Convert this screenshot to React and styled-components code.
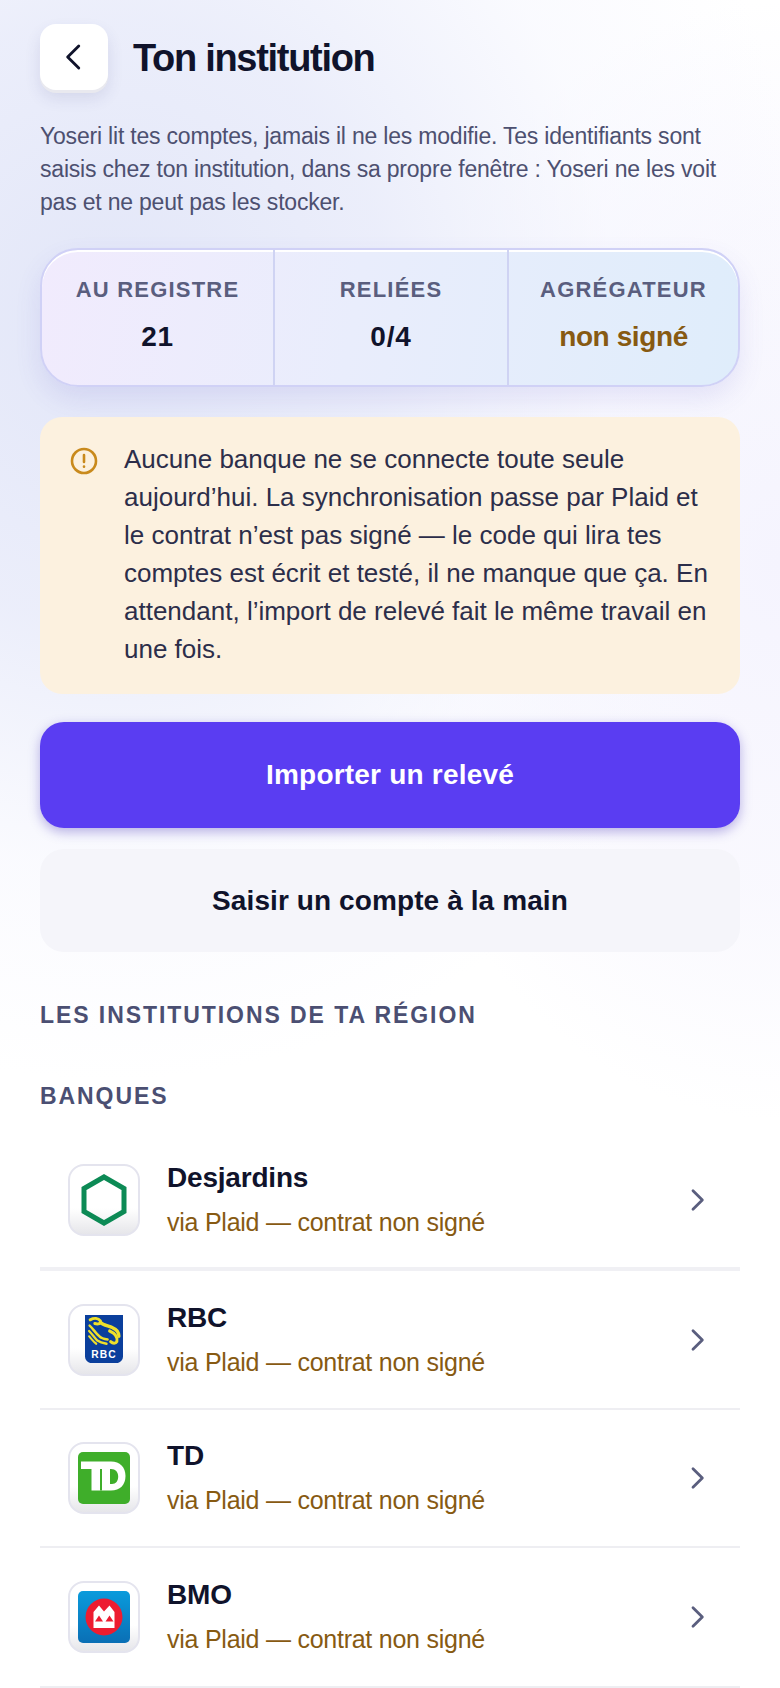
import React from "react";
import styled, { createGlobalStyle } from "styled-components";

const Global = createGlobalStyle`
  html, body { margin: 0; padding: 0; background: #fff; }
  body { font-family: "Liberation Sans", Arial, sans-serif; }
  * { box-sizing: border-box; }
`;
const Page = styled.div`
  width: 780px; height: 1688px; overflow: hidden; padding: 24px 40px 0;
  background:
    radial-gradient(ellipse 700px 760px at 110px 320px, #e2e6f8 0%, rgba(232,235,250,.85) 40%, rgba(245,246,254,.5) 72%, rgba(255,255,255,0) 100%),
    radial-gradient(ellipse 420px 560px at 780px 560px, #f5f4fe 0%, rgba(247,246,254,.7) 60%, rgba(255,255,255,0) 100%),
    #fff;
`;
const Header = styled.header`display: flex; align-items: center; gap: 24px; height: 66px;`;
const BackButton = styled.button`
  width: 68px; height: 66px; border: 0; border-radius: 16px; background: #fff; padding: 0;
  display: flex; align-items: center; justify-content: center;
  box-shadow: 0 3px 0 #e9e9ef, 0 8px 16px rgba(60,60,120,.12);
`;
const Title = styled.h1`margin: 2px 0 0 1px; font-size: 38px; font-weight: 700; letter-spacing: -1.3px; color: #10132b;`;
const Intro = styled.p`margin: 30px 0 0; font-size: 23px; line-height: 33px; color: #4d5070; letter-spacing: -.2px; width: 700px;`;
const Stats = styled.section`
  margin-top: 29px; height: 139px; display: grid; grid-template-columns: 231px 234px 1fr;
  border-radius: 38px; border: 2px solid #d0d1f6;
  background: linear-gradient(100deg, #f1ebfd 0%, #e9edfc 45%, #dfedfb 100%);
  box-shadow: 0 12px 26px rgba(90,80,200,.12), inset 0 2px 0 #fff;
  overflow: hidden;
`;
const Stat = styled.div`
  display: flex; flex-direction: column; align-items: center; padding-top: 27px; gap: 18px;
  & + & { border-left: 2px solid #cfd3f3; }
`;
const StatLabel = styled.div`font-size: 22px; font-weight: 700; letter-spacing: 1.2px; color: #5a5e7e; line-height: 26px;`;
const StatValue = styled.div`font-size: 28px; font-weight: 700; line-height: 32px; letter-spacing: ${p => p.$warn ? "-.4px" : ".8px"}; color: ${p => p.$warn ? "#875a12" : "#10132b"};`;
const Alert = styled.div`
  margin-top: 30px; height: 277px; border-radius: 22px; background: #fcf1df;
  padding: 23px 30px 0 30px; display: flex; gap: 24px;
`;
const AlertIcon = styled.div`flex: none; width: 30px; padding-top: 7px;`;
const AlertText = styled.p`margin: 0; font-size: 26px; line-height: 38px; color: #2c2e4a;`;
const Button = styled.button`
  display: block; width: 100%; border: 0; font-family: inherit; font-weight: 700; font-size: 28px;
  letter-spacing: ${p => p.$primary ? ".2px" : ".1px"};
  border-radius: 24px; margin-top: ${p => p.$primary ? 28 : 21}px; height: ${p => p.$primary ? 106 : 103}px;
  background: ${p => p.$primary ? "#5a3df2" : "#f5f5fa"}; color: ${p => p.$primary ? "#fff" : "#10132b"};
  box-shadow: ${p => p.$primary ? "0 4px 12px rgba(60,40,180,.35)" : "none"};
`;
const SectionTitle = styled.h2`
  margin: ${p => p.$top}px 0 0; font-size: 23px; line-height: 26px; font-weight: 700; letter-spacing: 1.93px; color: #4b4f72;
`;
const List = styled.div`margin-top: 24px;`;
const Row = styled.div`
  display: flex; align-items: center; height: ${p => p.$h}px; padding: 0 27px 0 28px; border-bottom: ${p => p.$thick ? "4px solid #f0f0f4" : "2px solid #eeeef2"};
`;
const LogoTile = styled.div`
  flex: none; width: 72px; height: 72px; border-radius: 16px; border: 2px solid #e4e4ee;
  background: linear-gradient(180deg, #fff 0%, #fff 62%, #e6e6ea 100%);
  display: flex; align-items: center; justify-content: center; margin-right: 27px;
`;
const RowText = styled.div`flex: 1; min-width: 0; padding-bottom: 2px;`;
const RowName = styled.div`font-size: 28px; font-weight: 700; line-height: 36px; letter-spacing: -.2px; color: #10132b;`;
const RowSub = styled.div`margin-top: 10px; font-size: 25px; line-height: 32px; letter-spacing: -.25px; color: #875a12;`;

const Chevron = ({ size = 28, color = "#5a5e7e", dir = "right", sw = 2.1 }) => (
  <svg width={size} height={size} viewBox="0 0 24 24" fill="none" stroke={color} strokeWidth={sw} strokeLinecap="round" strokeLinejoin="round">
    <path d={dir === "right" ? "M9 5l7 7-7 7" : "M15 5l-7 7 7 7"} />
  </svg>
);
const Desjardins = () => (
  <svg width="50" height="54" viewBox="0 0 50 54"><path d="M25 4 45 15.5V38.5L25 50 5 38.5V15.5Z" fill="none" stroke="#0c8a55" strokeWidth="5" /></svg>
);
const RBC = () => (
  <svg width="38" height="49" viewBox="0 0 37 46" preserveAspectRatio="none">
    <path d="M0 0H37V39C37 42 35 44 32 45H5C2 44 0 42 0 39Z" fill="#0b3f9c" />
    <g fill="none" stroke="#efe02a" strokeLinecap="round" strokeLinejoin="round">
      <path d="M5 4.5C9 2.5 13 3 15 5.5 16 8 13 9 9.5 8" strokeWidth="2.8" />
      <path d="M15 7C18 10 23 10 27 12 31 13.5 33 16 33 20" strokeWidth="3.2" />
      <path d="M24 15C29 17 32 21 31 25 30 27 27 27 25 25" strokeWidth="3" />
      <path d="M4.5 10C8 13 10 17 14 20 16 22 19 22.5 22 23" strokeWidth="2.4" />
      <path d="M4 15C7 18 9 21 12 24 15 26 18 26.5 21 27" strokeWidth="2.2" />
      <path d="M4 20C6 22 8 25 11 27" strokeWidth="2" />
    </g>
    <text x="18.5" y="40" textAnchor="middle" fill="#fff" fontFamily="Liberation Sans" fontWeight="700" fontSize="10" letterSpacing="1">RBC</text>
  </svg>
);
const TD = () => (
  <svg width="52" height="52" viewBox="0 0 52 52">
    <rect width="52" height="52" rx="5" fill="#3fae2a" />
    <path d="M3 9.5H33C42 9.5 47.5 15 47.5 24C47.5 33 42 38.5 33 38.5H13.5V17H3Z" fill="#fff" />
    <path d="M22 17H24V38.5H22Z M32 17V32H34C38 32 40.2 29 40.2 24.5C40.2 20 37.5 17 33 17Z" fill="#3fae2a" />
  </svg>
);
const BMO = () => (
  <svg width="52" height="52" viewBox="0 0 52 52">
    <defs><linearGradient id="bmoBg" x1="0" y1="0" x2="0" y2="1"><stop offset="0" stopColor="#0a9bdc" /><stop offset="1" stopColor="#0a6fb5" /></linearGradient></defs>
    <rect width="52" height="52" rx="5" fill="url(#bmoBg)" />
    <circle cx="26" cy="26" r="18.5" fill="#ed1c30" />
    <path d="M15.5 37V21L21 14.5 26 20.5 31.5 14.5 36.5 21V37ZM17 30.5H25L21 24.5ZM27.5 30.5H35.5L31.5 24.5Z" fill="#fff" fillRule="evenodd" />
  </svg>
);

const banks = [
  { name: "Desjardins", Logo: Desjardins, h: 138, thick: true },
  { name: "RBC", Logo: RBC, h: 139 },
  { name: "TD", Logo: TD, h: 138 },
  { name: "BMO", Logo: BMO, h: 140 },
];

export default function App() {
  return (
    <Page>
      <Global />
      <Header>
        <BackButton aria-label="Retour"><Chevron color="#10132b" dir="left" size={38} sw={1.8} /></BackButton>
        <Title>Ton institution</Title>
      </Header>
      <Intro>Yoseri lit tes comptes, jamais il ne les modifie. Tes identifiants sont saisis chez ton institution, dans sa propre fenêtre : Yoseri ne les voit pas et ne peut pas les stocker.</Intro>
      <Stats>
        <Stat><StatLabel>AU REGISTRE</StatLabel><StatValue>21</StatValue></Stat>
        <Stat><StatLabel>RELIÉES</StatLabel><StatValue>0/4</StatValue></Stat>
        <Stat><StatLabel>AGRÉGATEUR</StatLabel><StatValue $warn>non signé</StatValue></Stat>
      </Stats>
      <Alert>
        <AlertIcon>
          <svg width="28" height="28" viewBox="0 0 28 28" fill="none" stroke="#c98a1c" strokeWidth="2.6" strokeLinecap="round"><circle cx="14" cy="14" r="12" /><path d="M14 8v7M14 19.5v.2" /></svg>
        </AlertIcon>
        <AlertText>Aucune banque ne se connecte toute seule aujourd’hui. La synchronisation passe par Plaid et le contrat n’est pas signé — le code qui lira tes comptes est écrit et testé, il ne manque que ça. En attendant, l’import de relevé fait le même travail en une fois.</AlertText>
      </Alert>
      <Button $primary>Importer un relevé</Button>
      <Button>Saisir un compte à la main</Button>
      <SectionTitle $top={50}>LES INSTITUTIONS DE TA RÉGION</SectionTitle>
      <SectionTitle $top={55}>BANQUES</SectionTitle>
      <List>
        {banks.map(({ name, Logo, h, thick }) => (
          <Row key={name} $h={h} $thick={thick}>
            <LogoTile><Logo /></LogoTile>
            <RowText>
              <RowName>{name}</RowName>
              <RowSub>via Plaid — contrat non signé</RowSub>
            </RowText>
            <Chevron size={32} />
          </Row>
        ))}
      </List>
    </Page>
  );
}
